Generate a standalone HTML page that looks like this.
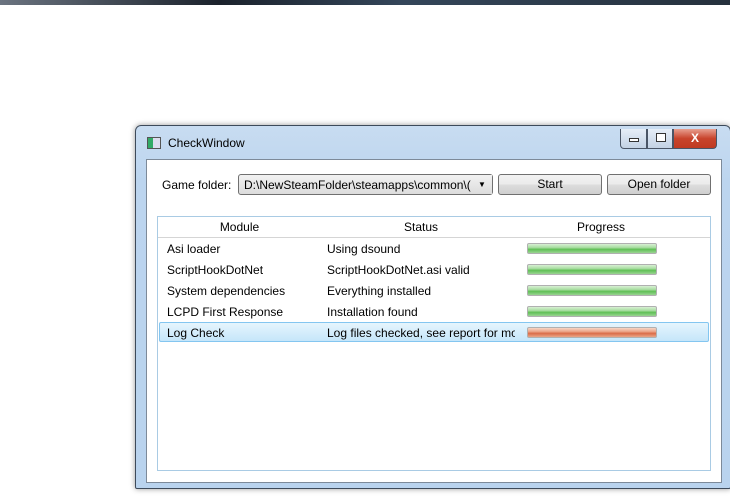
<!DOCTYPE html>
<html><head><style>
*{margin:0;padding:0;box-sizing:border-box}
body{width:730px;height:496px;background:#fff;position:relative;overflow:hidden;font-family:"Liberation Sans",sans-serif;font-size:12px;color:#000}
.top{position:absolute;left:0;top:0;width:730px;height:5px;background:linear-gradient(90deg,#6b7480 0%,#1b222c 30%,#34465a 55%,#26313d 100%)}
.frame{position:absolute;left:135px;top:125px;width:596px;height:364px;border:1px solid #3d4a5a;border-radius:6px 6px 2px 2px;background:linear-gradient(180deg,#c8dcf1 0%,#bcd5ef 15%,#b9d3ee 100%);box-shadow:0 0 6px rgba(0,0,0,.4)}
.client{position:absolute;left:146px;top:159px;width:576px;height:324px;background:#fff;border:1px solid #7d8a99}
.title{position:absolute;left:168px;top:136px;font-size:12px}
.icon{position:absolute;left:147px;top:137px;width:14px;height:12px;border:1px solid #555;background:linear-gradient(90deg,#3a6 0 40%,#dde 40%)}
.cb{position:absolute;top:129px;height:20px;border:1px solid #4a5566;border-top:none;background:linear-gradient(#e6eef8,#c3d2e4)}
.btn{position:absolute;top:174px;height:21px;border:1px solid #707070;border-radius:3px;background:linear-gradient(#f2f2f2 0%,#ebebeb 50%,#dddddd 51%,#cfcfcf 100%);text-align:center;line-height:19px}
.lv{position:absolute;left:157px;top:216px;width:554px;height:255px;border:1px solid #a9cbe4}
.hdr{position:absolute;top:218px;height:20px;border-right:1px solid #d5d5d5;border-bottom:1px solid #d5d5d5;text-align:center;line-height:19px;background:#fff}
.t{position:absolute;line-height:14px}
.bar{position:absolute;left:527px;width:130px;height:11px;border:1px solid #b0b0b0;border-radius:2px;background:linear-gradient(#d8f0d4 0%,#a8dda0 40%,#5fbf55 60%,#9ad492 100%)}
.bar.r{background:linear-gradient(#f6d6c6 0%,#eca488 40%,#da6c48 60%,#eaa688 100%)}
.sel{position:absolute;left:159px;top:322px;width:550px;height:20px;border:1px solid #84c6f0;border-radius:2px;background:linear-gradient(#e6f5fd,#c5e6fa)}
</style></head><body>
<div class="top"></div>
<div class="frame"></div>
<div class="icon"></div>
<div class="title">CheckWindow</div>
<div class="cb" style="left:620px;width:27px;border-radius:0 0 0 4px"><div style="position:absolute;left:8px;top:9px;width:10px;height:4px;border:1px solid #333;background:#fff"></div></div>
<div class="cb" style="left:647px;width:26px"><div style="position:absolute;left:8px;top:4px;width:10px;height:9px;border:1px solid #333;background:#fff"></div></div>
<div class="cb" style="left:673px;width:44px;border-radius:0 0 4px 0;background:linear-gradient(#e8a090,#c8442c 50%,#c03a22)"><div style="color:#fff;font-weight:bold;text-align:center;line-height:18px;font-size:12px">X</div></div>
<div class="client"></div>
<div class="t" style="left:162px;top:178px">Game folder:</div>
<div style="position:absolute;left:238px;top:174px;width:255px;height:21px;border:1px solid #707070;border-radius:3px;background:linear-gradient(#f2f2f2,#dcdcdc)"><span style="position:absolute;left:5px;top:3px;white-space:nowrap">D:\NewSteamFolder\steamapps\common\(</span><span style="position:absolute;right:0;top:0;width:14px;height:19px;background:linear-gradient(#f2f2f2,#dcdcdc);font-size:8px;line-height:19px">▼</span></div>
<div class="btn" style="left:498px;width:104px">Start</div>
<div class="btn" style="left:607px;width:104px">Open folder</div>
<div class="lv"></div>
<div class="hdr" style="left:158px;width:164px">Module</div>
<div class="hdr" style="left:321px;width:201px">Status</div>
<div class="hdr" style="left:521px;width:161px">Progress</div>
<div class="hdr" style="left:681px;width:29px;border-right:none"></div>
<div class="sel"></div>
<div class="t" style="left:167px;top:242px">Asi loader</div><div class="t" style="left:327px;top:242px">Using dsound</div><div class="bar" style="top:243px"></div>
<div class="t" style="left:167px;top:263px">ScriptHookDotNet</div><div class="t" style="left:327px;top:263px">ScriptHookDotNet.asi valid</div><div class="bar" style="top:264px"></div>
<div class="t" style="left:167px;top:284px">System dependencies</div><div class="t" style="left:327px;top:284px">Everything installed</div><div class="bar" style="top:285px"></div>
<div class="t" style="left:167px;top:305px">LCPD First Response</div><div class="t" style="left:327px;top:305px">Installation found</div><div class="bar" style="top:306px"></div>
<div class="t" style="left:167px;top:326px">Log Check</div><div class="t" style="left:327px;top:326px;width:188px;overflow:hidden;white-space:nowrap">Log files checked, see report for more</div><div class="bar r" style="top:327px"></div>
</body></html>
